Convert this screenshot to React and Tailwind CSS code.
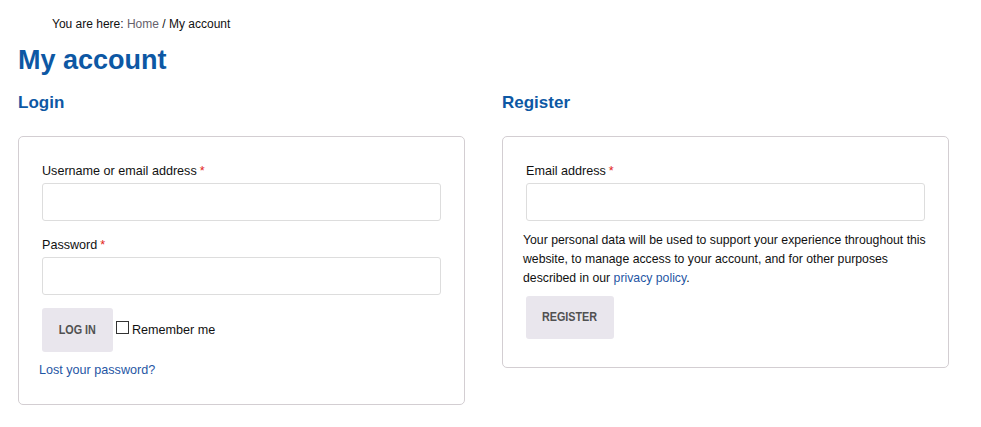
import React from "react";

function Req() {
  return <span className="text-[#e2231a] ml-[3px]">*</span>;
}

function Field({ label }) {
  return (
    <div>
      <label className="block text-[12.6px] leading-[18px] text-[#111]">
        {label}
        <Req />
      </label>
      <input
        type="text"
        className="mt-[3px] block w-full h-[38px] border border-[#ddd] rounded-[3px] bg-white outline-none"
      />
    </div>
  );
}

function Btn({ children, cls }) {
  return (
    <button
      type="button"
      className={`${cls} flex items-center justify-center rounded-[3px] bg-[#e9e6ed] text-[#515151] font-bold text-[13.5px] font-['Liberation_Sans',Arial,sans-serif]`}
    >
      <span className="inline-block scale-x-[0.8] whitespace-nowrap">{children}</span>
    </button>
  );
}

export default function App() {
  return (
    <div className="min-h-screen bg-white pl-[18px] text-[#111] font-['Liberation_Sans',Arial,sans-serif]">
      <div className="pt-[16px] pl-[34px] text-[12px] leading-[16px]">
        You are here: <span className="text-[#66616b]">Home</span> / My account
      </div>
      <h1 className="mt-[12px] text-[27px] leading-[32px] font-bold text-[#0d58a4]">My account</h1>
      <div className="mt-[15px] flex gap-[37px]">
        <div className="w-[447px]">
          <h2 className="text-[17px] leading-[24px] font-bold text-[#0d58a4]">Login</h2>
          <div className="mt-[21px] border border-[#d3ced2] rounded-[5px] px-[23px] pt-[25px] pb-[24px]">
            <Field label="Username or email address" />
            <div className="mt-[15px]">
              <Field label="Password" />
            </div>
            <div className="mt-[13px] flex items-center">
              <Btn cls="w-[71px] h-[44px]">LOG IN</Btn>
              <span className="ml-[3px] mb-[5px] w-[13px] h-[13px] border border-[#333] bg-white"></span>
              <span className="ml-[3px] text-[12.6px] leading-[19px]">Remember me</span>
            </div>
            <div className="mt-[9px] -ml-[3px] text-[12.6px] leading-[19px] text-[#1f56a4]">Lost your password?</div>
          </div>
        </div>
        <div className="w-[447px]">
          <h2 className="text-[17px] leading-[24px] font-bold text-[#0d58a4]">Register</h2>
          <div className="mt-[21px] border border-[#d3ced2] rounded-[5px] px-[23px] pt-[25px] pb-[28px]">
            <Field label="Email address" />
            <p className="mt-[10px] -ml-[3px] -mr-[6px] text-[12.25px] leading-[19px]">
              Your personal data will be used to support your experience throughout this website, to manage access to your account, and for other purposes described in our{" "}
              <span className="text-[#1f56a4]">privacy policy</span>.
            </p>
            <div className="mt-[8px]">
              <Btn cls="w-[88px] h-[43px]">REGISTER</Btn>
            </div>
          </div>
        </div>
      </div>
    </div>
  );
}
